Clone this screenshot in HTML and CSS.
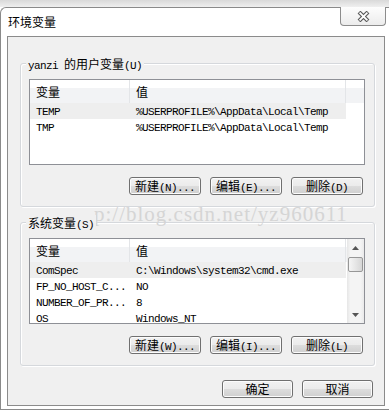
FILE: index.html
```html
<!DOCTYPE html>
<html lang="zh-CN">
<head>
    <meta charset="UTF-8">
    <meta name="viewport" content="width=device-width, initial-scale=1.0">
    <title>环境变量</title>
    <link rel="stylesheet" href="styles.css">
</head>
<body>
    <div class="window">
        <div class="titlebar">
            <span class="title">环境变量</span>
            <div class="close-btn">
                <svg width="13" height="11" viewBox="0 0 13 11">
                    <path d="M2 1 L11 10 M11 1 L2 10" stroke="#5c5c5c" stroke-width="4"/>
                    <path d="M2.6 1.6 L10.4 9.4 M10.4 1.6 L2.6 9.4" stroke="#fff" stroke-width="1.8"/>
                </svg>
            </div>
        </div>

        <div class="client">
            <!-- 用户变量 -->
            <div class="group">
                <div class="group-title"><span class="mono">yanzi </span>的用户变量<span class="mono">(U)</span></div>
                <div class="list">
                    <div class="list-main">
                        <div class="list-head">
                            <div class="col c1">变量</div>
                            <div class="col c2">值</div>
                        </div>
                        <div class="row sel">
                            <div class="col c1 mono">TEMP</div>
                            <div class="col c2 mono">%USERPROFILE%\AppData\Local\Temp</div>
                        </div>
                        <div class="row">
                            <div class="col c1 mono">TMP</div>
                            <div class="col c2 mono">%USERPROFILE%\AppData\Local\Temp</div>
                        </div>
                    </div>
                </div>
                <div class="btn-row">
                    <button class="btn">新建<span class="mono">(N)...</span></button>
                    <button class="btn">编辑<span class="mono">(E)...</span></button>
                    <button class="btn">删除<span class="mono">(D)</span></button>
                </div>
            </div>

            <!-- 系统变量 -->
            <div class="group">
                <div class="group-title">系统变量<span class="mono">(S)</span></div>
                <div class="list">
                    <div class="list-main">
                        <div class="list-head">
                            <div class="col c1">变量</div>
                            <div class="col c2">值</div>
                        </div>
                        <div class="row sel">
                            <div class="col c1 mono">ComSpec</div>
                            <div class="col c2 mono">C:\Windows\system32\cmd.exe</div>
                        </div>
                        <div class="row">
                            <div class="col c1 mono">FP_NO_HOST_C...</div>
                            <div class="col c2 mono">NO</div>
                        </div>
                        <div class="row">
                            <div class="col c1 mono">NUMBER_OF_PR...</div>
                            <div class="col c2 mono">8</div>
                        </div>
                        <div class="row">
                            <div class="col c1 mono">OS</div>
                            <div class="col c2 mono">Windows_NT</div>
                        </div>
                    </div>
                    <div class="vscroll">
                        <div class="sb-arrow">
                            <svg width="7" height="4" viewBox="0 0 7 4"><polygon points="3.5,0 7,4 0,4" fill="#555"/></svg>
                        </div>
                        <div class="sb-track"><div class="sb-thumb"></div></div>
                        <div class="sb-arrow">
                            <svg width="7" height="4" viewBox="0 0 7 4"><polygon points="0,0 7,0 3.5,4" fill="#555"/></svg>
                        </div>
                    </div>
                </div>
                <div class="btn-row">
                    <button class="btn">新建<span class="mono">(W)...</span></button>
                    <button class="btn">编辑<span class="mono">(I)...</span></button>
                    <button class="btn">删除<span class="mono">(L)</span></button>
                </div>
            </div>

            <div class="btn-row dialog-btns">
                <button class="btn">确定</button>
                <button class="btn">取消</button>
            </div>

            <!-- 水印（前半部分被标签挡住） -->
            <div class="watermark">p://blog.csdn.net/yz960611</div>
        </div>
    </div>
</body>
</html>
```

FILE: styles.css
```css
body {
    margin: 0;
    overflow: hidden;
    background: linear-gradient(#d9d9d9, #efefef 7px, #fff 7px);
    font-family: "Noto Sans CJK SC", sans-serif;
    font-size: 12px;
    color: #000;
}
.window {
    margin-top: 7px;
    height: 403px;
    box-sizing: border-box;
    border: 1px solid #8a8a8a;
    border-right: none;
    border-top-left-radius: 6px;
    background: #fff;
}
.titlebar {
    display: flex;
    justify-content: space-between;
    align-items: flex-start;
    height: 28px;
}
.title {
    padding: 6px 0 0 7px;
    line-height: 16px;
}
.close-btn {
    width: 46px;
    height: 19px;
    margin-top: -1px;
    margin-right: 3px;
    box-sizing: border-box;
    border: 1px solid #8c8c8c;
    border-top: none;
    border-radius: 0 0 4px 4px;
    background: linear-gradient(#fdfdfd, #ececec);
    display: flex;
    align-items: center;
    justify-content: center;
}
.client {
    position: relative;
    margin-left: 6px;
    width: 378px;
    height: 370px;
    box-sizing: border-box;
    border: 1px solid #8b8b8b;
    background: #f0f0f0;
    padding-top: 26px;
}
.group {
    margin: 0 9px 0 12px;
    border: 1px solid #d5d8dc;
    border-radius: 3px;
    box-shadow: inset 1px 1px 0 #fff, 1px 1px 0 #fff;
    padding-bottom: 11px;
}
.group + .group {
    margin-top: 15px;
}
.group-title {
    position: relative;
    z-index: 2;
    width: fit-content;
    margin: -8px 0 0 5px;
    padding: 0 2px;
    line-height: 15px;
    background: #f0f0f0;
}
.mono {
    font-family: "Liberation Mono", monospace;
    font-size: 11px;
    letter-spacing: -0.6px;
}
.list {
    display: flex;
    margin: 5px 0 0 8px;
    width: 336px;
    height: 86px;
    box-sizing: border-box;
    border: 1px solid #8e9096;
    background: #fff;
    overflow: hidden;
}
.list-main {
    flex: 1;
    min-width: 0;
}
.list-head {
    display: flex;
    height: 23px;
    background: linear-gradient(#fff 35%, #f2f3f5 35%);
}
.col {
    box-sizing: border-box;
    padding-left: 6px;
    white-space: nowrap;
    overflow: hidden;
}
.c1 {
    width: 100px;
}
.c2 {
    width: 216px;
}
.list-head .col {
    line-height: 24px;
    border-right: 1px solid #e3e5e8;
}
.row {
    display: flex;
    width: 316px;
    height: 16px;
    line-height: 18px;
}
.row.sel {
    background: #eeeeee;
}
.vscroll {
    width: 17px;
    display: flex;
    flex-direction: column;
    background: linear-gradient(90deg, #e6e6e6, #f4f4f4 20%, #f4f4f4 80%, #eaeaea);
}
.sb-arrow {
    height: 17px;
    display: flex;
    align-items: center;
    justify-content: center;
}
.sb-track {
    flex: 1;
}
.sb-thumb {
    margin: 1px 1px 0;
    height: 15px;
    box-sizing: border-box;
    border: 1px solid #979797;
    border-radius: 2px;
    background: linear-gradient(90deg, #f5f5f5, #e6e6e6 50%, #d6d6d6);
}
.btn-row {
    display: flex;
    justify-content: flex-end;
    gap: 9px;
    margin-top: 12px;
    padding-right: 11px;
}
.btn {
    width: 72px;
    height: 18px;
    box-sizing: border-box;
    padding: 0;
    border: 1px solid #707070;
    border-radius: 3px;
    background: linear-gradient(#f2f2f2, #ebebeb 50%, #dddddd 50%, #cfcfcf);
    box-shadow: inset 0 0 0 1px #fcfcfc;
    font-family: "Noto Sans CJK SC", sans-serif;
    font-size: 12px;
    line-height: 16px;
    color: #000;
}
.dialog-btns {
    margin-top: 14px;
}
.dialog-btns .btn {
    width: 71px;
}
.watermark {
    position: absolute;
    left: 86px;
    top: 167px;
    z-index: 1;
    font-family: "Liberation Serif", serif;
    font-size: 21px;
    line-height: 21px;
    letter-spacing: 1px;
    color: #d5d5d5;
    white-space: nowrap;
    pointer-events: none;
}
```
